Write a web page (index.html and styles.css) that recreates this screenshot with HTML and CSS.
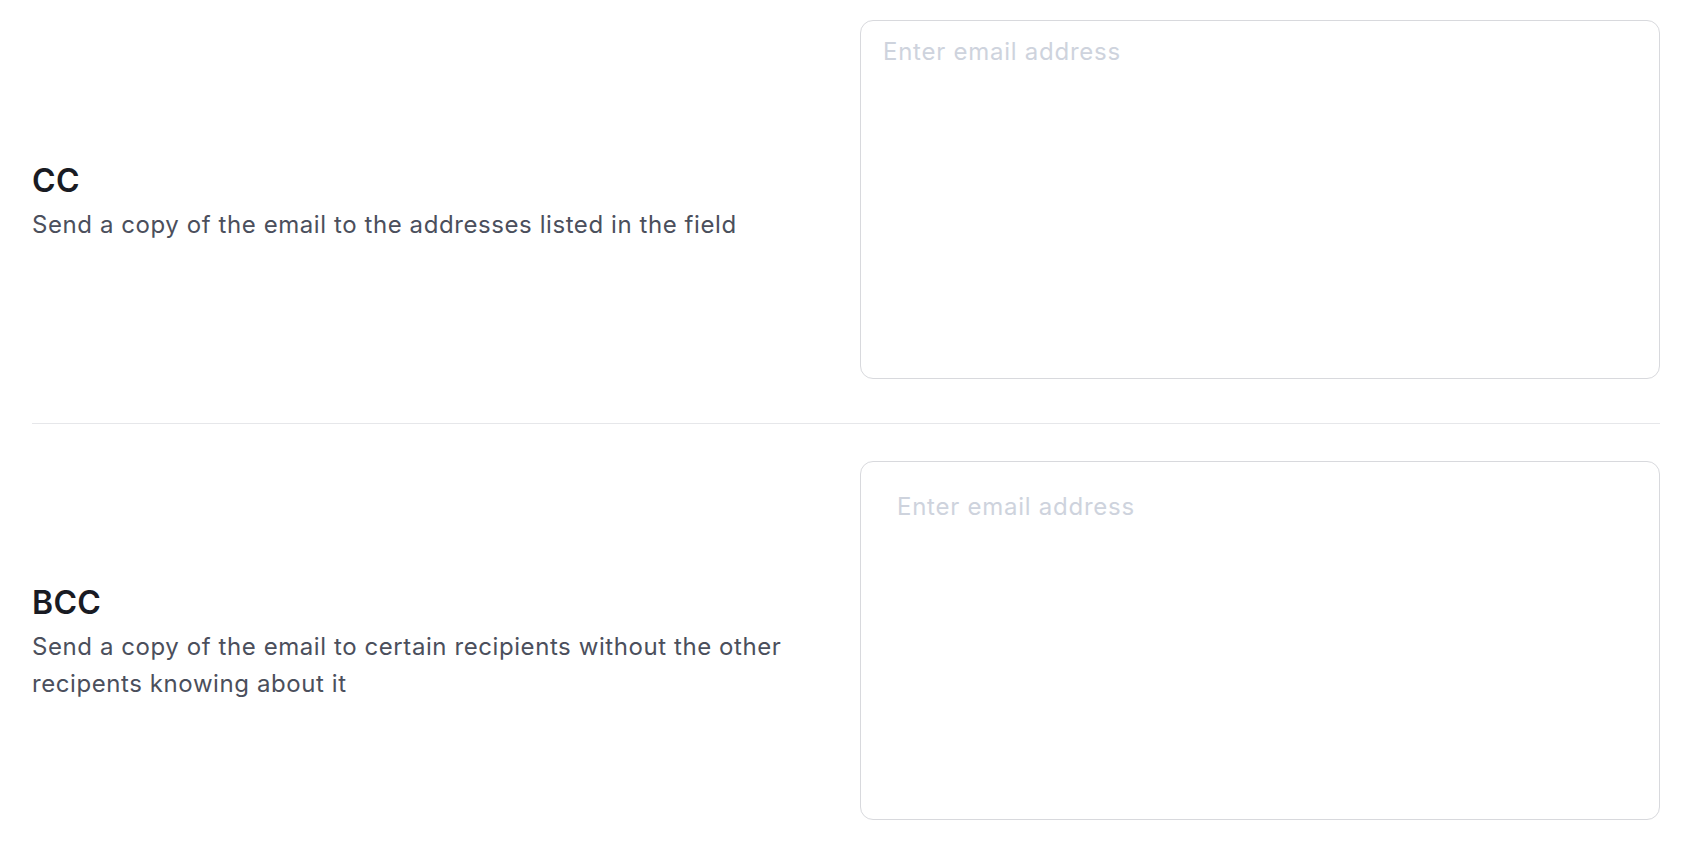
FILE: index.html
```html
<!DOCTYPE html>
<html lang="en">
<head>
<meta charset="utf-8">
<title>Email settings</title>
<link rel="stylesheet" href="styles.css">
</head>
<body>
<main class="settings">
  <section class="row row-first">
    <div class="info">
      <h2 class="title">CC</h2>
      <p class="desc">Send a copy of the email to the addresses listed in the field</p>
    </div>
    <div class="field field-cc">
      <span class="placeholder">Enter email address</span>
    </div>
  </section>
  <section class="row row-second">
    <div class="info">
      <h2 class="title">BCC</h2>
      <p class="desc">Send a copy of the email to certain recipients without the other recipents knowing about it</p>
    </div>
    <div class="field field-bcc">
      <span class="placeholder">Enter email address</span>
    </div>
  </section>
</main>
</body>
</html>
```

FILE: styles.css
```css
* { box-sizing: border-box; }
html, body { margin: 0; padding: 0; background: #ffffff; }
body {
  font-family: Inter, "Noto Sans", "Liberation Sans", sans-serif;
  color: #1b1d24;
}
.settings {
  padding: 0 22px 0 32px;
}
.row {
  display: grid;
  grid-template-columns: 1fr 800px;
  column-gap: 28px;
  align-items: center;
}
.row-first {
  padding: 20px 0 44px;
  border-bottom: 1px solid #e6e7ea;
}
.row-second {
  padding: 37px 0 24px;
}
.info {
  display: flex;
  flex-direction: column;
  gap: 6px;
  padding-top: 5px;
}
.title {
  margin: 0;
  font-size: 32px;
  line-height: 38px;
  font-weight: 600;
  color: #191b23;
  letter-spacing: 0.3px;
}
.desc {
  margin: 0;
  font-size: 24px;
  line-height: 37px;
  color: #4b4f5c;
  font-weight: 400;
  letter-spacing: 0.58px;
}
.field {
  height: 359px;
  border: 1px solid #d8d9dd;
  border-radius: 13px;
  background: #fff;
}
.field-cc { padding: 15px 22px; }
.field-bcc { padding: 29px 36px; }
.placeholder {
  font-size: 24px;
  line-height: 32px;
  color: #ced3dd;
  letter-spacing: 0.75px;
}
```
